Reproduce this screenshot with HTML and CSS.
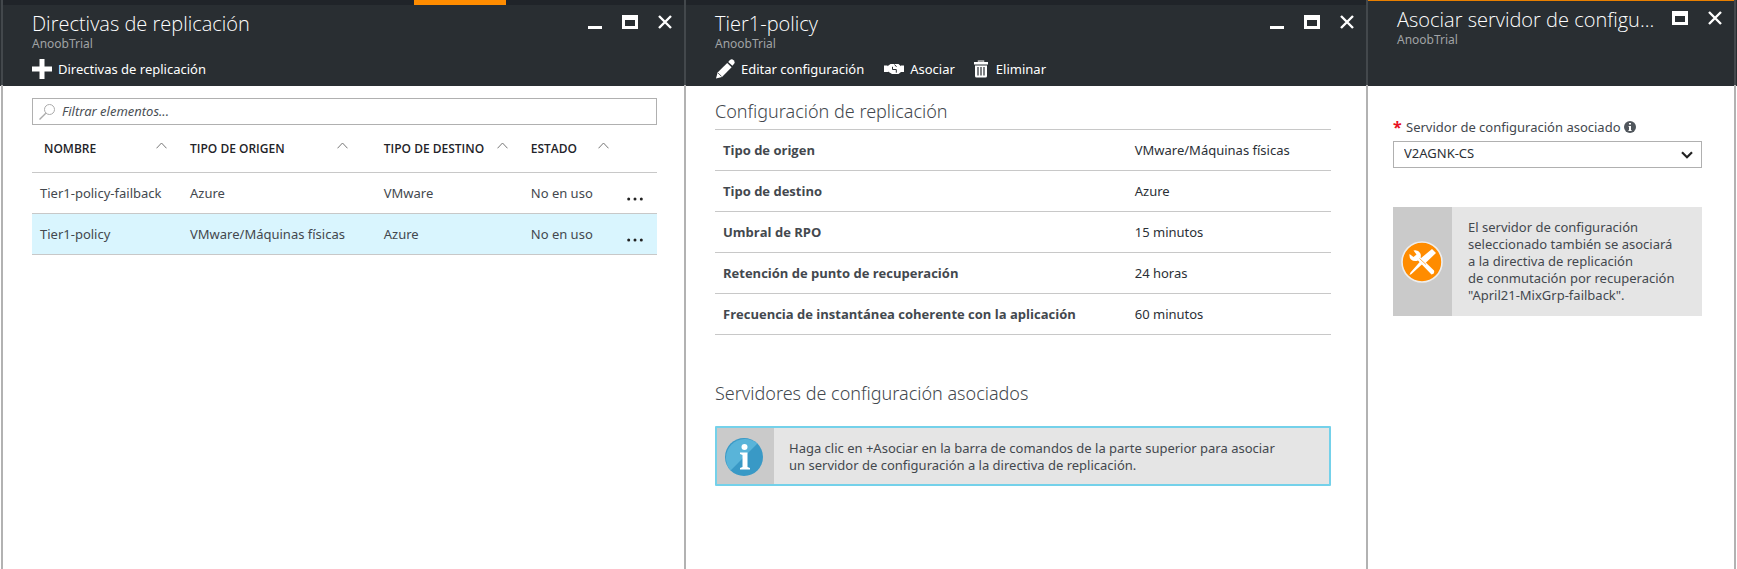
FILE: index.html
```html
<!DOCTYPE html>
<html lang="es">
<head>
<meta charset="utf-8">
<title>Directivas de replicación</title>
<link rel="stylesheet" href="styles.css">
</head>
<body>
<svg class="defs" aria-hidden="true">
  <symbol id="i-min" viewBox="0 0 14 14"><path d="M0 11h14v3H0z" fill="currentColor"/></symbol>
  <symbol id="i-max" viewBox="0 0 16 14"><path fill-rule="evenodd" d="M0 0h16v14H0zM3 5v6h10V5z" fill="currentColor"/></symbol>
  <symbol id="i-close" viewBox="0 0 14 14"><path d="M1 1l12 12M13 1L1 13" stroke="currentColor" stroke-width="2.4" fill="none"/></symbol>
  <symbol id="i-caret" viewBox="0 0 11 7"><path d="M.5 6.300L5.500 1l5 5.300" stroke="currentColor" fill="none"/></symbol>
</svg>
<main class="portal">
  <section class="blade">
    <div class="strip"><div class="strip-active"></div></div>
    <header class="head">
      <div class="title-row">
        <div class="titles"><h1 class="title">Directivas de replicación</h1><p class="subtitle">AnoobTrial</p></div>
        <div class="window-buttons">
          <button class="win" aria-label="Minimizar"><svg width="14" height="14"><use href="#i-min"/></svg></button>
          <button class="win" aria-label="Maximizar"><svg width="16" height="14"><use href="#i-max"/></svg></button>
          <button class="win" aria-label="Cerrar"><svg width="14" height="14"><use href="#i-close"/></svg></button>
        </div>
      </div>
      <div class="commands">
        <button class="command"><svg width="20" height="20" viewBox="0 0 20 20"><path d="M7.500 0h5v7.500H20v5h-7.500V20h-5v-7.500H0v-5h7.500z" fill="#fff"/></svg>Directivas de replicación</button>
      </div>
    </header>
    <div class="content list-content">
      <label class="filter">
        <svg width="16" height="16" viewBox="0 0 16 16"><circle cx="10.500" cy="5.500" r="5" fill="none" stroke="#aaa"/><path d="M6.800 9.200L.5 15.500" stroke="#aaa" stroke-width="1.300"/></svg>
        <input class="filter-input" type="text" aria-label="Filtrar elementos" placeholder="Filtrar elementos...">
      </label>
      <table class="grid">
        <colgroup><col class="c-name"><col class="c-source"><col class="c-target"><col class="c-state"><col class="c-more"></colgroup>
        <thead><tr>
          <th><div class="sort first">NOMBRE<svg width="11" height="7"><use href="#i-caret"/></svg></div></th>
          <th><div class="sort wide">TIPO DE ORIGEN<svg width="11" height="7"><use href="#i-caret"/></svg></div></th>
          <th><div class="sort">TIPO DE DESTINO<svg width="11" height="7"><use href="#i-caret"/></svg></div></th>
          <th><div class="sort narrow">ESTADO<svg width="11" height="7"><use href="#i-caret"/></svg></div></th>
          <th></th>
        </tr></thead>
        <tbody>
          <tr><td>Tier1-policy-failback</td><td>Azure</td><td>VMware</td><td>No en uso</td><td><button class="more" aria-label="Más"><svg width="16" height="4" viewBox="0 0 16 4"><g fill="#222"><circle cx="1.700" cy="2" r="1.500"/><circle cx="8" cy="2" r="1.500"/><circle cx="14.300" cy="2" r="1.500"/></g></svg></button></td></tr>
          <tr class="selected"><td>Tier1-policy</td><td>VMware/Máquinas físicas</td><td>Azure</td><td>No en uso</td><td><button class="more" aria-label="Más"><svg width="16" height="4" viewBox="0 0 16 4"><g fill="#222"><circle cx="1.700" cy="2" r="1.500"/><circle cx="8" cy="2" r="1.500"/><circle cx="14.300" cy="2" r="1.500"/></g></svg></button></td></tr>
        </tbody>
      </table>
    </div>
  </section>

  <section class="blade">
    <div class="strip"></div>
    <header class="head">
      <div class="title-row">
        <div class="titles"><h1 class="title">Tier1-policy</h1><p class="subtitle">AnoobTrial</p></div>
        <div class="window-buttons">
          <button class="win" aria-label="Minimizar"><svg width="14" height="14"><use href="#i-min"/></svg></button>
          <button class="win" aria-label="Maximizar"><svg width="16" height="14"><use href="#i-max"/></svg></button>
          <button class="win" aria-label="Cerrar"><svg width="14" height="14"><use href="#i-close"/></svg></button>
        </div>
      </div>
      <div class="commands">
        <button class="command"><svg width="20" height="20" viewBox="0 0 20 20"><path d="M1 19.500l1.600-6L12.200 3.900l4.400 4.400L7 17.900z" fill="#fff"/><path d="M13.200 2.900l1.600-1.700q2-1.700 3.800.1t.3 3.800l-1.500 1.700z" fill="#fff"/><path d="M2.900 13.800l3.700 3.700" stroke="#292e32" stroke-width=".8"/></svg>Editar configuración</button>
        <button class="command"><svg width="20" height="20" viewBox="0 0 20 20"><path d="M0 6.500h3.500v.8L6.500 5h8l2.500 2.200v-.7h3v6.500h-3l-2.500 2H8l-4-2.500v.5H0z" fill="#fff"/><path d="M8.500 7.800v2.700h3.800v3.200M10.500 5.500l2 2.300" stroke="#292e32" fill="none"/></svg>Asociar</button>
        <button class="command command-delete"><svg width="14" height="18" viewBox="0 0 14 18"><path d="M4.500 2.500V1h5v1.500" fill="none" stroke="#bbb" stroke-width="1.500"/><path d="M0 2h14v2.500H0z" fill="#fff"/><path d="M1 5.500h12V16q0 1.500-1.500 1.500h-9Q1 17.500 1 16z" fill="#fff"/><path d="M4 7v8.500M7 7v8.500M10 7v8.500" stroke="#292e32" stroke-width="1.200"/></svg>Eliminar</button>
      </div>
    </header>
    <div class="content detail-content">
      <h2 class="section-title">Configuración de replicación</h2>
      <table class="props">
        <tbody>
          <tr><th scope="row">Tipo de origen</th><td>VMware/Máquinas físicas</td></tr>
          <tr><th scope="row">Tipo de destino</th><td>Azure</td></tr>
          <tr><th scope="row">Umbral de RPO</th><td>15 minutos</td></tr>
          <tr><th scope="row">Retención de punto de recuperación</th><td>24 horas</td></tr>
          <tr><th scope="row">Frecuencia de instantánea coherente con la aplicación</th><td>60 minutos</td></tr>
        </tbody>
      </table>
      <h2 class="section-title servers">Servidores de configuración asociados</h2>
      <div class="notice info">
        <div class="notice-icon"><svg width="38" height="38" viewBox="0 0 38 38"><circle cx="19" cy="19" r="19" fill="#3999c6"/><path d="M5.600 32.400A19 19 0 0 1 32.400 5.600z" fill="#59b4d9"/><circle cx="19.500" cy="9" r="3" fill="#fff"/><path d="M15 14.500h7.500V29l2.500 1v1.500H15V30l2.500-1V17L15 16z" fill="#fff"/></svg></div>
        <p class="notice-text">Haga clic en +Asociar en la barra de comandos de la parte superior para asociar<br>un servidor de configuración a la directiva de replicación.</p>
      </div>
    </div>
  </section>

  <section class="blade blade-last">
    <header class="head head-active">
      <div class="title-row">
        <div class="titles"><h1 class="title">Asociar servidor de configu...</h1><p class="subtitle">AnoobTrial</p></div>
        <div class="window-buttons">
          <button class="win" aria-label="Maximizar"><svg width="16" height="14"><use href="#i-max"/></svg></button>
          <button class="win" aria-label="Cerrar"><svg width="14" height="14"><use href="#i-close"/></svg></button>
        </div>
      </div>
    </header>
    <div class="content form-content">
      <label class="field-label" for="server"><span class="required">*</span>Servidor de configuración asociado<svg width="12" height="12" viewBox="0 0 12 12"><circle cx="6" cy="6" r="6" fill="#50565c"/><path d="M5 2h2v1.600H5zM4.500 5H7v4.200h.8v.8H4.300v-.8H5V5.800h-.5z" fill="#fff"/></svg></label>
      <div class="select-wrap">
        <select class="select" id="server"><option>V2AGNK-CS</option></select>
        <svg class="chevron" width="12" height="8" viewBox="0 0 12 8"><path d="M1 1.300l5 5 5-5" fill="none" stroke="#222" stroke-width="2.200"/></svg>
      </div>
      <div class="notice warn">
        <div class="notice-icon"><svg width="42" height="42" viewBox="0 0 42 42"><circle cx="21" cy="21" r="20" fill="#ff8c00" stroke="#eee" stroke-width="1.600"/><path d="M12.500 9.500q4.500-1 6.600 2.500 1.200 2 .5 4.500L33 29.500q1 3.500-2.500 4L17 19.500q-4 1.500-7-1-2-2-1.500-5.500l4 3 3-2.500z" fill="#fff"/><path d="M31 8l4 4-10.500 10-1.500-.5L10.500 33 8.500 34l1-2.500L20 19.500l-.5-2z" fill="#fff"/><path d="M18.500 17.500l6.500 6" stroke="#ff8c00" stroke-width=".7"/></svg></div>
        <p class="notice-text">El servidor de configuración<br>seleccionado también se asociará<br>a la directiva de replicación<br>de conmutación por recuperación<br>"April21-MixGrp-failback".</p>
      </div>
    </div>
  </section>
</main>
</body>
</html>
```
FILE: styles.css
```css
* { box-sizing: border-box; }
body { margin: 0; background: #fff; color: #43484e; font: 13px/17px "Noto Sans", "Open Sans", sans-serif; }
h1, h2, p { margin: 0; font-weight: 400; }
button { padding: 0; border: 0; background: none; color: inherit; font: inherit; cursor: pointer; }
svg { display: block; flex: none; }
.defs { display: none; }

.portal { display: grid; grid-template-columns: 683fr 682fr 371fr; min-height: 100vh; background: linear-gradient(#292e32 86px, #fff 86px); padding-left: 1px; }
.blade { display: flex; flex-direction: column; min-width: 0; border-left: 2px solid #b2b2b2; border-image: linear-gradient(#43484c 86px, #b2b2b2 86px) 2; }
.blade-last { border-right: 2px solid #b2b2b2; margin-right: 1px; }
.strip { height: 5px; background: #202429; }
.strip-active { width: 92px; height: 5px; margin-left: 411px; background: #ff8c00; }

.head { height: 81px; padding: 6px 12px 0 29px; background: #292e32; color: #fff; }
.head-active { height: 86px; border-top: 1px solid #e87f00; }
.title-row { display: flex; justify-content: space-between; }
.title { font: 300 20px/26px "Open Sans", "Noto Sans", sans-serif; white-space: nowrap; }
.subtitle { font-size: 12px; line-height: 14px; color: #a0a3a5; }
.window-buttons { display: flex; gap: 20px; padding-top: 4px; align-items: flex-start; }
.commands { display: flex; gap: 20px; padding-top: 8px; }
.command { display: flex; align-items: center; gap: 6px; height: 20px; white-space: nowrap; }
.command-delete { gap: 8px; margin-left: -1px; }

.content { flex: 1; background: #fff; }
.list-content { padding: 12px 27px 20px 29px; }
.filter { display: flex; align-items: center; gap: 7px; height: 27px; padding: 0 6px; border: 1px solid #b0b0b0; }
.filter-input { flex: 1; min-width: 0; padding: 0; border: 0; outline: 0; background: none; font: inherit; font-style: italic; color: #3b4046; }
.filter-input::placeholder { color: #4b5056; opacity: 1; }
.grid, .props { width: 100%; border-collapse: collapse; table-layout: fixed; }
.c-name { width: 24%; }
.c-source { width: 31%; }
.c-target { width: 147px; }
.c-state { width: 96px; }
.grid th { height: 47px; padding: 0 0 0 8px; border-bottom: 1px solid #c8c8c8; font: 600 12px/17px "Open Sans", "Noto Sans", sans-serif; color: #1f2429; text-align: left; }
.grid td { height: 41px; padding: 2px 0 0 8px; border-bottom: 1px solid #c8c8c8; }
.sort { display: flex; justify-content: space-between; align-items: flex-start; padding-right: 15px; white-space: nowrap; }
.sort svg { margin-top: 2px; color: #777; }
.sort.first { padding-left: 4px; }
.sort.wide { padding-right: 28px; }
.sort.narrow { padding-right: 10px; }
.selected { background: #d9f5fe; }
.more { display: block; padding-top: 10px; }

.detail-content { padding: 13px 35px 20px 29px; }
.section-title { font-size: 18px; line-height: 24px; font-weight: 300; }
.props { margin-top: 6px; border-top: 1px solid #c8c8c8; }
.props th, .props td { height: 41px; padding: 0 0 0 8px; border-bottom: 1px solid #c8c8c8; text-align: left; }
.props th { width: 67%; font-family: "Open Sans", "Noto Sans", sans-serif; }
.props td { padding-left: 7px; color: #2b3036; }
.servers { margin-top: 46px; }

.notice { display: flex; background: #e5e5e5; }
.notice-icon { display: grid; place-items: center; width: 59px; padding-right: 2px; flex: none; background: #cacaca; }
.notice-text { padding: 12px 16px; }
.info { margin-top: 21px; border: 2px solid #74d1ea; border-radius: 1px; }
.info .notice-icon { width: 57px; padding: 2px 4px 0 0; }
.info .notice-text { padding: 12px 15px 10px; }

.form-content { padding: 32px 32px 20px 25px; }
.field-label { display: flex; align-items: center; gap: 3px; line-height: 18px; white-space: nowrap; }
.required { width: 10px; color: #e81123; font-size: 16px; font-weight: 700; }
.select-wrap { display: grid; align-items: center; margin-top: 5px; }
.select { grid-area: 1 / 1; width: 100%; height: 27px; padding: 0 10px 2px; border: 1px solid #b0b0b0; border-radius: 0; appearance: none; background: #fff; color: #2b3036; font: inherit; }
.chevron { grid-area: 1 / 1; justify-self: end; margin-right: 9px; pointer-events: none; }
.warn { margin-top: 39px; }
```
